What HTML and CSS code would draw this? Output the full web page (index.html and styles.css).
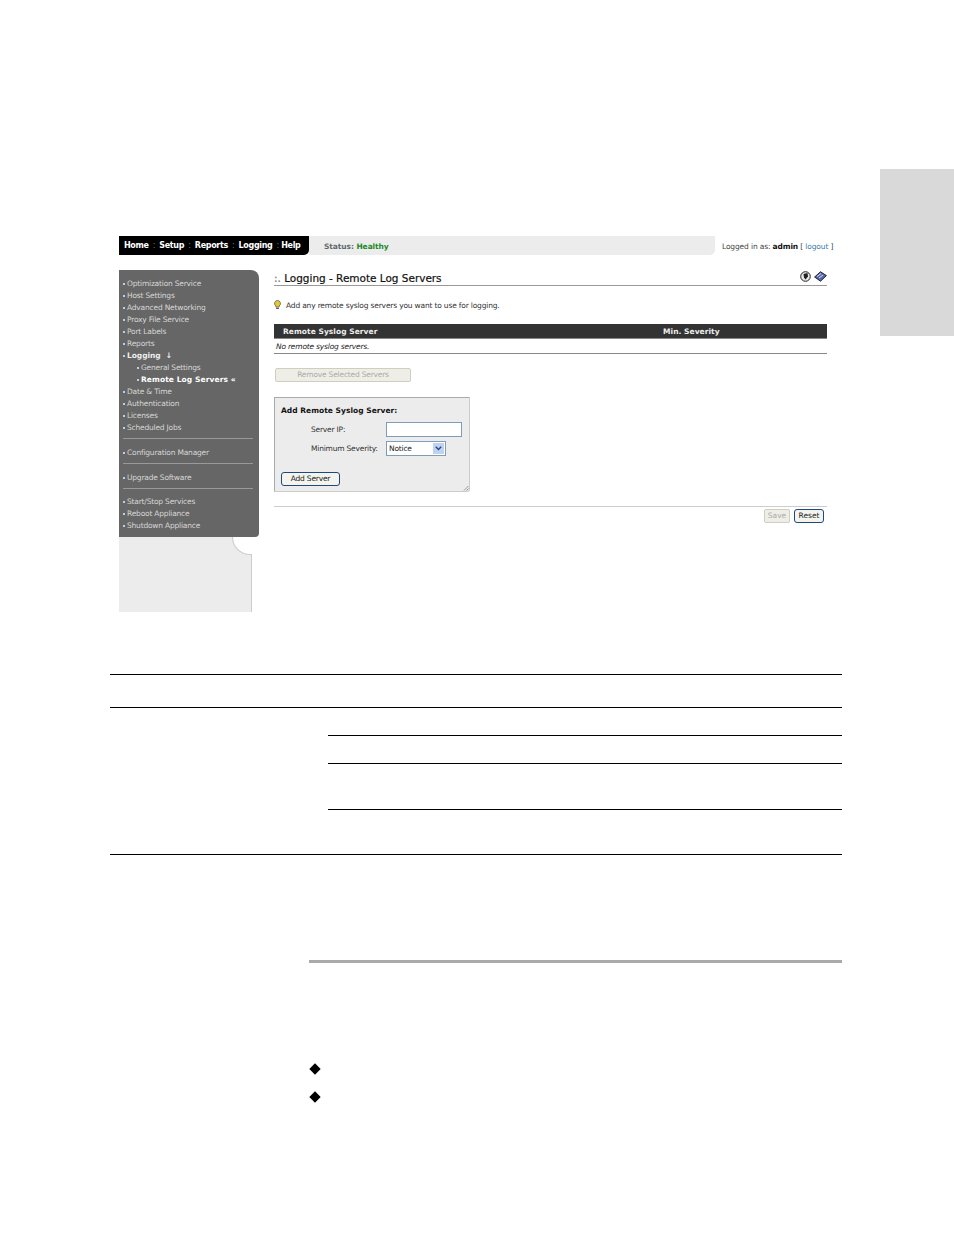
FILE: index.html
```html
<!DOCTYPE html>
<html lang="en">
<head>
<meta charset="utf-8">
<title>Logging - Remote Log Servers</title>
<link rel="stylesheet" href="styles.css">
</head>
<body>
<div class="side-tab"></div>
<main class="page">
  <section class="shot">
    <header class="topbar">
      <nav class="mainnav">
        <a>Home</a><i>:</i><a class="cur">Setup</a><i>:</i><a>Reports</a><i>:</i><a>Logging</a><i>:</i><a>Help</a>
      </nav>
      <div class="status">Status: <b>Healthy</b></div>
      <div class="login">Logged in as: <b>admin</b> [ <a>logout</a> ]</div>
    </header>
    <div class="columns">
      <aside class="sidecol">
        <ul class="menu">
          <li>Optimization Service</li>
          <li>Host Settings</li>
          <li>Advanced Networking</li>
          <li>Proxy File Service</li>
          <li>Port Labels</li>
          <li>Reports</li>
          <li class="open">Logging &nbsp;↓</li>
          <li class="sub">General Settings</li>
          <li class="sub on">Remote Log Servers «</li>
          <li>Date &amp; Time</li>
          <li>Authentication</li>
          <li>Licenses</li>
          <li>Scheduled Jobs</li>
          <li class="sep"></li>
          <li>Configuration Manager</li>
          <li class="sep"></li>
          <li>Upgrade Software</li>
          <li class="sep"></li>
          <li>Start/Stop Services</li>
          <li>Reboot Appliance</li>
          <li>Shutdown Appliance</li>
        </ul>
        <div class="sidefoot"><span class="notch"></span></div>
      </aside>
      <div class="content">
        <div class="title">
          <h1><span class="dots">:.</span> Logging - Remote Log Servers</h1>
          <div class="tools">
            <svg width="11" height="11" viewBox="0 0 11 11"><circle cx="5.500" cy="5.500" r="4.800" fill="#e8e8e8" stroke="#222"/><path d="M3.500 3 7.500 2 8 5.500 5.500 8.500 4 6.500z" fill="#222"/></svg>
            <svg width="13" height="11" viewBox="0 0 13 11"><path d="M6.500.8 12.400 4.600 6.500 10.200.6 6z" fill="#5566aa" stroke="#223"/><path d="M3 5.500 7 2.500M5 7l4-3" stroke="#dde" fill="none"/></svg>
          </div>
        </div>
        <p class="hint">
          <svg width="7" height="9" viewBox="0 0 7 9"><path d="M3.500.5a3 3 0 0 1 1.600 5.500v1H1.900V6A3 3 0 0 1 3.500.5z" fill="#e8c92c" stroke="#776"/><path d="M2 8.300h3" stroke="#444"/></svg>
          <span>Add any remote syslog servers you want to use for logging.</span>
        </p>
        <div class="tablehead"><span>Remote Syslog Server</span><span class="sev">Min. Severity</span></div>
        <div class="tablebody">No remote syslog servers.</div>
        <button class="btn-off wide" disabled>Remove Selected Servers</button>
        <form class="addbox">
          <h2>Add Remote Syslog Server:</h2>
          <div class="field"><label>Server IP:</label><span class="ipbox"></span></div>
          <div class="field"><label>Minimum Severity:</label>
            <span class="select">Notice<span class="arrow"><svg width="7" height="5" viewBox="0 0 7 5"><path d="M.8.8 3.500 3.500 6.200.8" fill="none" stroke="#224a90" stroke-width="1.500"/></svg></span></span>
          </div>
          <span class="btn add">Add Server</span>
          <svg class="grip" width="6" height="6" viewBox="0 0 6 6"><path d="M5.500 1 1 5.500M5.500 3.500 3.500 5.500" stroke="#999"/></svg>
        </form>
        <div class="actions">
          <span class="btn-off small">Save</span>
          <span class="btn small">Reset</span>
        </div>
      </div>
    </div>
  </section>
  <div class="rule-full r1"></div>
  <div class="rule-full r2"></div>
  <div class="rule-part r3"></div>
  <div class="rule-part r4"></div>
  <div class="rule-part r5"></div>
  <div class="rule-full r6"></div>
  <div class="rule-thick"></div>
  <div class="diamond d1"></div>
  <div class="diamond d2"></div>
</main>
</body>
</html>
```
FILE: styles.css
```css
* { box-sizing: border-box; }
html, body { margin: 0; padding: 0; background: #fff; }
body { height: 1235px; overflow: hidden; font-family: "DejaVu Sans", Verdana, sans-serif; font-size: 7.500px; color: #222; position: relative; }
.side-tab { position: absolute; top: 169px; right: 0; width: 74px; height: 167px; background: #d9d9d9; }
.page { padding: 236px 112px 0 110px; }
.shot { margin-left: 9px; width: 715px; height: 376px; }
.topbar { display: flex; align-items: stretch; height: 19px; }
.mainnav { flex: none; width: 190px; background: #000; color: #fff; font-weight: bold; border-bottom-right-radius: 5px; display: flex; align-items: center; padding-left: 5px; font-size: 8px; white-space: nowrap; }
.mainnav i { color: #777; font-style: normal; margin: 0 4px; font-weight: normal; }
.mainnav i:last-of-type { margin-right: 2px; }
.mainnav a { letter-spacing: -.33px; }
.status { flex: none; width: 406px; background: #ececec; border-radius: 0 0 5px 0; padding-left: 15px; line-height: 21px; color: #5f6b70; font-weight: bold; letter-spacing: -.08px; }
.status b { color: #1e8a1e; }
.login { flex: none; margin-left: 7px; line-height: 21px; color: #444; white-space: nowrap; letter-spacing: -.14px; }
.login b { color: #111; }
.login a { color: #3a7ca8; }
.columns { display: flex; margin-top: 15px; }
.sidecol { width: 140px; flex: none; }
.menu { list-style: none; margin: 0; padding: 8px 6px 6px 8px; background: #666; color: #d6d6d6; width: 140px; height: 267px; border-radius: 0 8px 4px 0; line-height: 12px; }
.menu li { position: relative; white-space: nowrap; height: 12px; letter-spacing: -.2px; }
.menu li:not(.sep)::before { content: ""; position: absolute; left: -4px; top: 5px; width: 2px; height: 2px; background: #ccc; }
.menu .open { font-weight: bold; color: #eee; letter-spacing: -.05px; }
.menu .sub { padding-left: 14px; }
.menu .sub::before { left: 10px !important; }
.menu .on { font-weight: bold; color: #fff; letter-spacing: .09px; }
.menu .sep { height: 1px; margin: 4px 0 8px -4px; width: 130px; background: #999; }
.menu .sep:nth-last-child(4) { margin-bottom: 7px; }
.sidefoot { position: relative; width: 133px; height: 75px; background: #ececec; border-right: 1px solid #ccc; }
.notch { position: absolute; right: -1px; top: 0; width: 20px; height: 18px; background: #fff; border-left: 1px solid #ccc; border-bottom: 1px solid #ccc; border-radius: 0 0 0 19px; }
.content { width: 553px; margin-left: 15px; }
.title { display: flex; justify-content: space-between; height: 16px; border-bottom: 1px solid #999; }
.title h1 { margin: 0; font-size: 10.500px; font-weight: normal; line-height: 16px; color: #111; letter-spacing: -.02px; -webkit-text-stroke: .2px #111; }
.dots { color: #999; }
.tools { display: flex; gap: 3px; align-items: flex-start; padding-top: 1px; }
.hint { margin: 14px 0 0; height: 12px; display: flex; align-items: flex-start; gap: 5px; color: #333; letter-spacing: -.18px; white-space: nowrap; }
.hint span { line-height: 11px; }
.tablehead { margin-top: 12px; height: 15px; background: #333; color: #eee; font-weight: bold; border-bottom: 1px solid #888; display: flex; line-height: 15px; padding-left: 9px; letter-spacing: .05px; }
.tablehead span:first-child { width: 380px; }
.tablebody { height: 15px; border-bottom: 1px solid #888; font-style: italic; line-height: 15px; padding-left: 2px; letter-spacing: -.2px; }
.btn-off { display: inline-block; background: #efeee6; border: 1px solid #cfcec0; border-radius: 2px; color: #aaa; font: 7.500px "DejaVu Sans", sans-serif; padding: 0; text-align: center; }
.wide { display: block; width: 136px; height: 14px; margin: 14px 0 0 1px; line-height: 12px; letter-spacing: -.2px; }
.addbox { position: relative; display: block; margin-top: 15px; width: 196px; height: 95px; background: #ececec; border: 1px solid #aaa; border-right-color: #ccc; border-bottom-color: #ccc; padding: 7px 0 0 6px; border-radius: 0 0 3px 0; }
.addbox h2 { margin: 0 0 4px; font-size: 7.500px; line-height: 11px; color: #111; letter-spacing: .03px; }
.field { display: flex; align-items: center; height: 19px; padding-left: 30px; color: #333; letter-spacing: -.2px; white-space: nowrap; }
.field label { width: 75px; }
.ipbox { width: 76px; height: 15px; background: #fff; border: 1px solid #7f9db9; }
.select { position: relative; width: 60px; height: 15px; background: #fff; border: 1px solid #7f9db9; line-height: 13px; padding-left: 2px; color: #222; }
.arrow { position: absolute; top: 1px; right: 1px; width: 11px; height: 11px; background: #c1d2ee; display: flex; align-items: center; justify-content: center; }
.btn { display: inline-block; background: #f4f3ee; border: 1px solid #1c4a7c; border-radius: 3px; color: #222; text-align: center; }
.add { display: block; margin-top: 14px; width: 59px; height: 14px; line-height: 12px; letter-spacing: -.2px; }
.grip { position: absolute; right: 0; bottom: 0; }
.actions { margin-top: 14px; width: 553px; border-top: 1px solid #ccc; padding: 2px 3px 0 0; display: flex; justify-content: flex-end; gap: 4px; }
.small { height: 14px; line-height: 12px; }
.btn-off.small { width: 26px; }
.btn.small { width: 30px; }
.rule-full, .rule-part, .rule-thick, .diamond { position: absolute; }
.rule-full { left: 110px; width: 732px; height: 1px; background: #000; }
.rule-part { left: 328px; width: 514px; height: 1px; background: #000; }
.r1 { top: 674px; } .r2 { top: 707px; } .r3 { top: 735px; } .r4 { top: 763px; } .r5 { top: 809px; } .r6 { top: 854px; }
.rule-thick { left: 309px; top: 960px; width: 533px; height: 3px; background: #aaa; }
.diamond { left: 311px; width: 8px; height: 8px; background: #000; transform: rotate(45deg); }
.d1 { top: 1065px; } .d2 { top: 1093px; }
```
